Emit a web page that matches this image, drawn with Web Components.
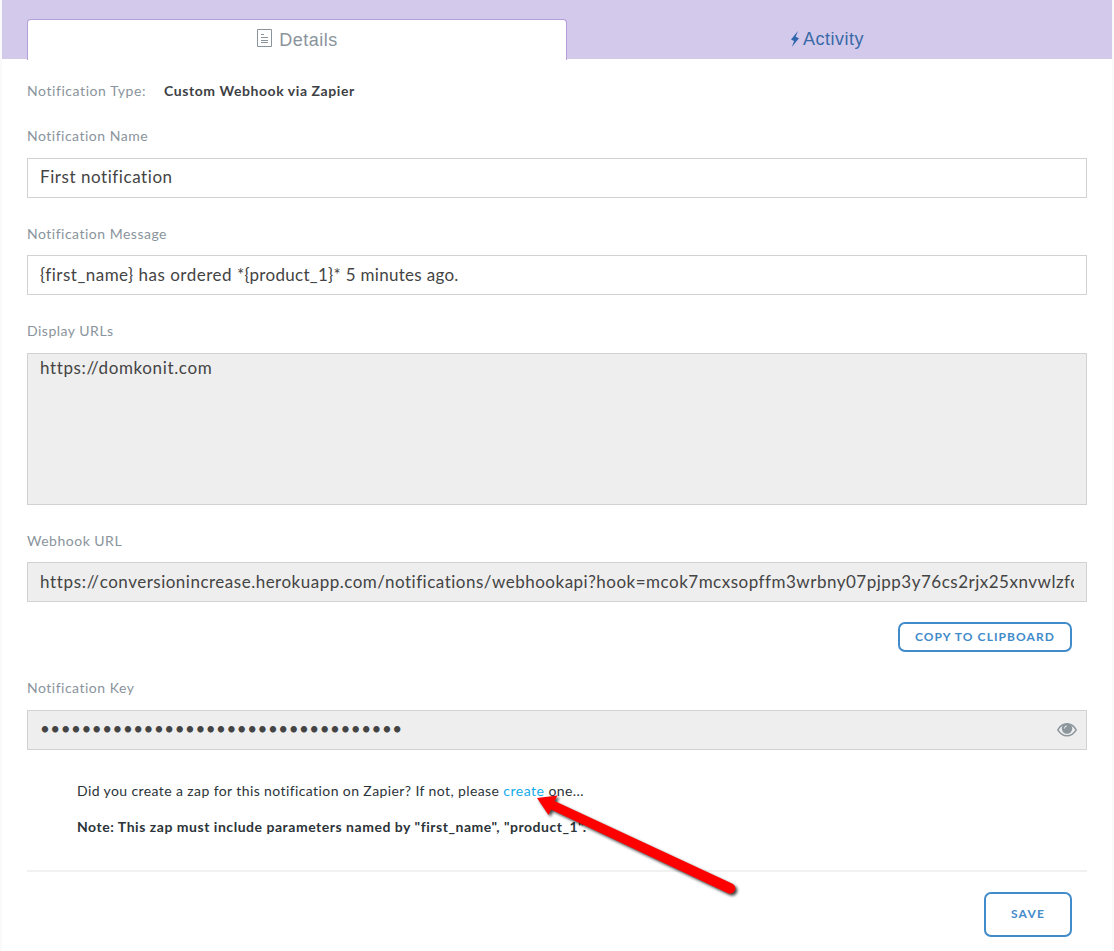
<!DOCTYPE html>
<html lang="en">
<head>
<meta charset="utf-8">
<title>Notification details</title>
<style>
html,body{margin:0;height:951px;overflow:hidden;background:#fafafa}
body{font-family:Lato,sans-serif;font-size:14px;letter-spacing:.5px;color:#2c3439}
</style>
</head>
<body>
<notification-page></notification-page>
<script>
const define = (name, html) => {
  const template = document.createElement('template');
  template.innerHTML = html;
  customElements.define(name, class extends HTMLElement {
    constructor() {
      super();
      this.attachShadow({mode: 'open'}).append(template.content.cloneNode(true));
    }
  });
};

define('tab-bar', `
<style>
:host{display:grid;grid-template-columns:540px 521px;height:40px;padding:19px 24px 0 25px;background:#d3c9ea}
</style><slot></slot>`);

define('tab-item', `
<style>
:host{display:flex;justify-content:center;align-items:center;box-sizing:border-box;height:40px;color:#3a69a8;font:18px/20px "Liberation Sans",sans-serif;letter-spacing:.5px;gap:4px}
:host([active]){height:41px;background:#fff;color:#8a949c;border:1px solid #b39ddb;border-bottom:0;border-radius:4px 4px 0 0;gap:7px}
</style><slot name="icon"></slot><span><slot></slot></span>`);

define('doc-icon', `
<style>:host{display:block;width:16px;height:18px;margin-top:-4px}svg{display:block}</style>
<svg width="16" height="18" fill="none" stroke="#8a949c"><path d="M1.500.5h14v17h-14z"/><path d="M5 5.500h3M5 8.500h7M5 11.500h7M5 13.500h7"/></svg>`);

define('bolt-icon', `
<style>:host{display:block;width:8px;height:16px}svg{display:block}</style>
<svg width="8" height="16" fill="#2f66ae"><path d="M7 0L0 8.400l3.100 1.600L.8 16 8 7.300 4.700 5.800z"/></svg>`);

define('eye-icon', `
<style>:host{display:block;width:20px;height:14px;margin-top:2px}svg{display:block}</style>
<svg width="20" height="14"><path d="M.8 6.800Q4.500.8 10 .8T19.200 6.800Q15.500 12.800 10 12.800T.8 6.800z" fill="none" stroke="#8c969d" stroke-width="1.500"/><circle cx="10" cy="5.500" r="5.200" fill="#8c969d"/><path d="M7.300 5.600Q7.300 3 10 2.900" fill="none" stroke="#eee"/></svg>`);

define('form-field', `
<style>
:host{display:block;margin-top:var(--gap,26px)}
.label{height:20px;line-height:20px;color:#8a949c;margin-bottom:var(--label-gap,12px)}
.box{display:flex;align-items:center;justify-content:space-between;box-sizing:border-box;height:40px;padding:var(--drop,0) 9px 2px 12px;border:1px solid #d2d2d2;background:#fff;color:#444;font-size:17px;line-height:24px}
.value{flex:1;min-width:0;white-space:nowrap;overflow:hidden;margin-right:3px;letter-spacing:var(--track,.5px)}
:host([readonly]) .box{background:#eee}
:host([multiline]) .box{height:152px;align-items:flex-start;padding-top:2px}
</style>
<div class="label"><slot name="label"></slot></div>
<div class="box"><div class="value"><slot></slot></div><slot name="icon"></slot></div>`);

define('outline-button', `
<style>
:host{display:flex;align-items:center;justify-content:center;box-sizing:border-box;width:174px;height:30px;border:2px solid #428bca;border-radius:7px;color:#428bca;font-weight:700;font-size:12px;letter-spacing:1.080px;line-height:16px}
:host([large]){width:88px;height:45px;padding-bottom:2px;letter-spacing:1.200px}
</style><slot></slot>`);

define('button-row', `
<style>:host{display:flex;justify-content:flex-end;padding:20px 15px 0 0}</style><slot></slot>`);

define('pointer-arrow', `
<style>:host{position:absolute;left:528px;top:785px;width:220px;height:125px}svg{display:block;filter:drop-shadow(2px 2px 1.500px rgba(0,0,0,.75))}</style>
<svg width="220" height="125"><path d="M7 13L27.500 10.500 24.500 16 202 98.500A5 5 0 0 1 198 108.300L21 24.500 18.500 30z" fill="#f00"/></svg>`);

define('notification-page', `
<style>
:host{display:block;position:relative;width:1110px;height:951px;margin-left:2px;background:#fff}
main{display:block;width:1060px;margin-left:25px}
.type{display:flex;gap:18px;padding-top:22px;line-height:20px;letter-spacing:.57px}
.type span{color:#8a949c}
.type b{color:#3d4145}
.help{padding:31px 0 0 50px;line-height:20px;white-space:nowrap}
p{margin:0 0 16px;letter-spacing:.4px}
.help b{letter-spacing:.53px}
.rule{height:2px;margin-top:33px;background:#f1f1f2}
a{color:#15ace8;letter-spacing:.5px}
</style>
<tab-bar>
 <tab-item active><doc-icon slot="icon"></doc-icon>Details</tab-item>
 <tab-item><bolt-icon slot="icon"></bolt-icon>Activity</tab-item>
</tab-bar>
<main>
 <div class="type"><span>Notification Type:</span><b>Custom Webhook via Zapier</b></div>
 <form-field style="--gap:25px;--track:.56px"><span slot="label">Notification Name</span>First notification</form-field>
 <form-field style="--label-gap:11px;--drop:2px"><span slot="label">Notification Message</span>{first_name} has ordered <span style="letter-spacing:.3px">*{product_1}* 5 minutes ago.</span></form-field>
 <form-field readonly multiline style="--track:.63px"><span slot="label">Display URLs</span>https://domkonit.com</form-field>
 <form-field readonly style="--label-gap:11px;--drop:2px"><span slot="label">Webhook URL</span><span style="letter-spacing:.68px">https://</span>conversionincrease.herokuapp.com/notifications/webhookapi?hook=mcok7mcxsopffm3wrbny07pjpp3y76cs2rjx25xnvwlzfc</form-field>
 <button-row><outline-button>COPY TO CLIPBOARD</outline-button></button-row>
 <form-field readonly><span slot="label">Notification Key</span>•••••••••••••••••••••••••••••••••••<eye-icon slot="icon"></eye-icon></form-field>
 <div class="help">
  <p>Did you create a zap for this notification on Zapier? If not, please <a>create</a> one...</p>
  <b>Note: This zap must include parameters named by "first_name", "product_1".</b>
 </div>
 <div class="rule"></div>
 <button-row><outline-button large>SAVE</outline-button></button-row>
</main>
<pointer-arrow></pointer-arrow>`);
</script>
</body>
</html>
